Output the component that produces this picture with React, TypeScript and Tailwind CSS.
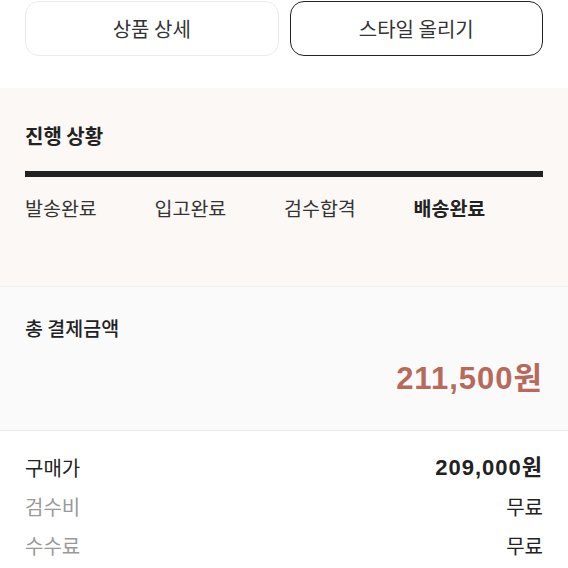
import React from "react";

const steps = ["발송완료", "입고완료", "검수합격", "배송완료"];

const fees = [
    { label: "구매가", value: "209,000원", strong: true },
    { label: "검수비", value: "무료", strong: false },
    { label: "수수료", value: "무료", strong: false },
];

const num = { fontFamily: '"Liberation Sans", "Noto Sans CJK KR", sans-serif' };

const App: React.FC = () => {
    return (
        <div
            className="w-[568px] h-[568px] overflow-hidden bg-white text-[#222]"
            style={{ fontFamily: '"Noto Sans CJK KR", "Noto Sans", sans-serif' }}
        >
            <div className="flex gap-[11px] px-[25px] pt-[1px] h-[88px]">
                <button className="flex-1 h-[55px] rounded-[14px] border border-[#ebebeb] bg-white text-[20px] text-[#333]">
                    상품 상세
                </button>
                <button className="flex-1 h-[55px] rounded-[14px] border-[1.5px] border-[#222] bg-white text-[20px] text-[#333]">
                    스타일 올리기
                </button>
            </div>

            <div className="bg-[#fcf8f5] h-[199px] px-[25px] pt-[34px] border-b border-[#efefef]">
                <h2 className="text-[20px] font-bold leading-[28px]">진행 상황</h2>
                <div className="mt-[21px] h-[6px] bg-[#222]" />
                <div className="grid grid-cols-4 mt-[18px]">
                    {steps.map((s, i) => (
                        <span
                            key={s}
                            className={`text-[19.5px] leading-[26px] ${i === 3 ? "font-bold text-[#222]" : "text-[#333]"}`}
                        >
                            {s}
                        </span>
                    ))}
                </div>
            </div>

            <div className="bg-[#fafafa] h-[144px] px-[25px] pt-[28px] border-b border-[#ebebeb]">
                <p className="text-[19.5px] font-medium leading-[26px]">총 결제금액</p>
                <p
                    className="mt-[20px] text-right text-[31px] font-bold leading-[36px] tracking-[1px] text-[#b7695a]"
                    style={num}
                >
                    211,500원
                </p>
            </div>

            <div className="px-[25px] pt-[17px] flex flex-col">
                {fees.map((f) => (
                    <div key={f.label} className="flex justify-between items-center h-[39px]">
                        <span className={`text-[20px] ${f.strong ? "text-[#222]" : "text-[#999]"}`}>{f.label}</span>
                        <span
                            className={`text-[20px] ${f.strong ? "text-[22px] font-bold tracking-[1px] text-[#222]" : "text-[#222]"}`}
                            style={f.strong ? num : undefined}
                        >
                            {f.value}
                        </span>
                    </div>
                ))}
            </div>
        </div>
    );
};

export default App;
